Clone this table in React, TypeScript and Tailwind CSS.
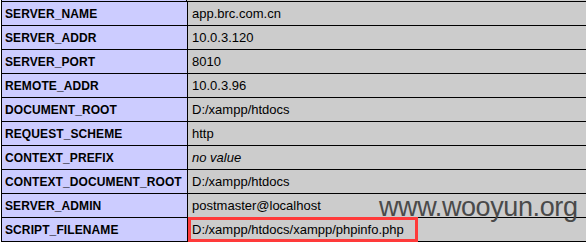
const rows: [string, string, boolean?][] = [
  ["SERVER_NAME", "app.brc.com.cn"],
  ["SERVER_ADDR", "10.0.3.120"],
  ["SERVER_PORT", "8010"],
  ["REMOTE_ADDR", "10.0.3.96"],
  ["DOCUMENT_ROOT", "D:/xampp/htdocs"],
  ["REQUEST_SCHEME", "http"],
  ["CONTEXT_PREFIX", "no value", true],
  ["CONTEXT_DOCUMENT_ROOT", "D:/xampp/htdocs"],
  ["SERVER_ADMIN", "postmaster@localhost"],
  ["SCRIPT_FILENAME", "D:/xampp/htdocs/xampp/phpinfo.php"],
];

export default function App() {
  return (
    <div className="relative w-[586px] h-[242px] overflow-hidden bg-white font-['Liberation_Sans',Arial,sans-serif] text-black">
      <div className="ml-px w-[700px]">
        <div className="flex h-px">
          <div className="w-[185px] bg-[#ccccff] border-l border-black" />
          <div className="flex-1 bg-[#cccccc] border-l border-black" />
        </div>
        <table className="w-[700px] border-collapse">
          <tbody>
            {rows.map(([k, v, italic], i) => (
              <tr key={k} className="h-6">
                <td className="w-[186px] border border-black bg-[#ccccff] pl-[3px] text-[12px] font-bold leading-none tracking-[0.1px]">
                  {k}
                </td>
                <td className="relative border border-black bg-[#cccccc] pl-1 text-[13px] leading-none">
                  <span className={italic ? "italic" : ""}>{v}</span>
                  {i === rows.length - 1 && (
                    <span className="absolute left-0 -top-px h-[25px] w-[230px] border-[3px] border-[#ff3a3a]" />
                  )}
                </td>
              </tr>
            ))}
          </tbody>
        </table>
      </div>
      <div className="absolute left-[379px] top-[194px] text-[27px] leading-none tracking-[-0.4px] text-[#4a4a4a]">
        www.wooyun.org
      </div>
    </div>
  );
}
